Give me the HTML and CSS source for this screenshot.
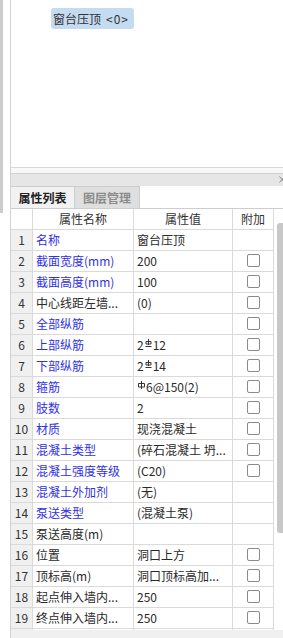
FILE: index.html
```html
<!DOCTYPE html>
<html>

<head>
  <title>属性列表</title>
  <link rel="stylesheet" href="styles.css">
</head>

<body>
  <div class="app">
    <div class="rail"><div class="rail-bar"></div></div>
    <div class="main">
      <div class="canvas"><span class="tag">窗台压顶<span class="tag-id">&lt;0&gt;</span></span></div>
      <div class="split"></div>
      <div class="dock-head">
        <svg class="dock-close" width="6" height="7" viewBox="0 0 6 7"><path d="M0.5 0.5 L5.5 6.5 M5.5 0.5 L0.5 6.5" stroke="#8a8a8a" stroke-width="1" fill="none"/></svg>
      </div>
      <div class="tabs">
        <div class="tab active">属性列表</div>
        <div class="tab">图层管理</div>
      </div>
      <div class="grid-area">
        <div class="grid">
          <div class="row head"><div class="c num"></div><div class="c name">属性名称</div><div class="c val">属性值</div><div class="c add">附加</div></div>
          <div class="row"><div class="c num">1</div><div class="c name blue">名称</div><div class="c val">窗台压顶</div><div class="c add"></div></div>
          <div class="row"><div class="c num">2</div><div class="c name blue">截面宽度(mm)</div><div class="c val">200</div><div class="c add"><span class="chk"></span></div></div>
          <div class="row"><div class="c num">3</div><div class="c name blue">截面高度(mm)</div><div class="c val">100</div><div class="c add"><span class="chk"></span></div></div>
          <div class="row"><div class="c num">4</div><div class="c name">中心线距左墙...</div><div class="c val">(0)</div><div class="c add"><span class="chk"></span></div></div>
          <div class="row"><div class="c num">5</div><div class="c name blue">全部纵筋</div><div class="c val"></div><div class="c add"><span class="chk"></span></div></div>
          <div class="row"><div class="c num">6</div><div class="c name blue">上部纵筋</div><div class="c val">2<svg class="rebar" width="7" height="10" viewBox="0 0 7 10"><path d="M3.5 0 V6 M1 2.5 H6 V5 H1 Z M0.5 7.5 H6.5" stroke="#333" stroke-width="1" fill="none"/></svg>12</div><div class="c add"><span class="chk"></span></div></div>
          <div class="row"><div class="c num">7</div><div class="c name blue">下部纵筋</div><div class="c val">2<svg class="rebar" width="7" height="10" viewBox="0 0 7 10"><path d="M3.5 0 V6 M1 2.5 H6 V5 H1 Z M0.5 7.5 H6.5" stroke="#333" stroke-width="1" fill="none"/></svg>14</div><div class="c add"><span class="chk"></span></div></div>
          <div class="row"><div class="c num">8</div><div class="c name blue">箍筋</div><div class="c val"><svg class="rebar" width="7" height="10" viewBox="0 0 7 10"><path d="M3.5 0 V8 M0.5 2.5 H6.5 V6 H0.5 Z" stroke="#333" stroke-width="1" fill="none"/></svg>6@150(2)</div><div class="c add"><span class="chk"></span></div></div>
          <div class="row"><div class="c num">9</div><div class="c name blue">肢数</div><div class="c val">2</div><div class="c add"><span class="chk"></span></div></div>
          <div class="row"><div class="c num">10</div><div class="c name blue">材质</div><div class="c val">现浇混凝土</div><div class="c add"><span class="chk"></span></div></div>
          <div class="row"><div class="c num">11</div><div class="c name blue">混凝土类型</div><div class="c val">(碎石混凝土 坍...</div><div class="c add"><span class="chk"></span></div></div>
          <div class="row"><div class="c num">12</div><div class="c name blue">混凝土强度等级</div><div class="c val">(C20)</div><div class="c add"><span class="chk"></span></div></div>
          <div class="row"><div class="c num">13</div><div class="c name blue">混凝土外加剂</div><div class="c val">(无)</div><div class="c add"></div></div>
          <div class="row"><div class="c num">14</div><div class="c name blue">泵送类型</div><div class="c val">(混凝土泵)</div><div class="c add"></div></div>
          <div class="row"><div class="c num">15</div><div class="c name">泵送高度(m)</div><div class="c val"></div><div class="c add"></div></div>
          <div class="row"><div class="c num">16</div><div class="c name">位置</div><div class="c val">洞口上方</div><div class="c add"><span class="chk"></span></div></div>
          <div class="row"><div class="c num">17</div><div class="c name">顶标高(m)</div><div class="c val">洞口顶标高加...</div><div class="c add"><span class="chk"></span></div></div>
          <div class="row"><div class="c num">18</div><div class="c name">起点伸入墙内...</div><div class="c val">250</div><div class="c add"><span class="chk"></span></div></div>
          <div class="row"><div class="c num">19</div><div class="c name">终点伸入墙内...</div><div class="c val">250</div><div class="c add"><span class="chk"></span></div></div>
          <div class="row"><div class="c num"></div><div class="c name"></div><div class="c val"></div><div class="c add"></div></div>
        </div>
        <div class="vscroll"><div class="thumb"></div></div>
      </div>
      <div class="status"></div>
    </div>
  </div>
</body>

</html>
```

FILE: styles.css
```css
body {
  margin: 0;
  font-family: "Noto Sans CJK SC", "Liberation Sans", sans-serif;
  font-size: 12px;
  color: #2a2a2a;
  background: #fff;
}

.app {
  display: flex;
  width: 283px;
  height: 638px;
  overflow: hidden;
}

.rail {
  width: 10px;
  flex: none;
}

.rail-bar {
  width: 3px;
  height: 213px;
  background: #cdcdcd;
}

.main {
  display: flex;
  flex-direction: column;
  width: 272px;
  border-left: 1px solid #d2d2d2;
}

.canvas {
  height: 168px;
  box-sizing: border-box;
  border-bottom: 1px solid #d8d8d8;
  padding: 8px 0 0 40px;
}

.tag {
  display: inline-block;
  height: 21px;
  line-height: 21px;
  padding: 0 5px 0 2px;
  background: #c4dbf2;
  border-radius: 3px;
  color: #333;
  font-size: 12px;
}

.tag-id {
  margin-left: 5px;
  letter-spacing: 1px;
}

.split {
  height: 5px;
  background: #f8f8f8;
}

.dock-head {
  display: flex;
  justify-content: flex-end;
  align-items: center;
  height: 12px;
  border-top: 1px solid #cfcfcf;
  background: #e6e6e6;
}

.dock-close {
  margin-right: -2px;
}

.tabs {
  display: flex;
  height: 23px;
  box-sizing: border-box;
  border-bottom: 1px solid #cdcdcd;
}

.tab {
  width: 64px;
  box-sizing: content-box;
  border-right: 1px solid #cdcdcd;
  border-top: 1px solid #cdcdcd;
  background: #dfdfdf;
  color: #8c8c8c;
  font-weight: bold;
  text-align: center;
  line-height: 21px;
}

.tab.active {
  width: 63px;
  background: #f2f2f2;
  color: #222;
}

.grid-area {
  display: flex;
  height: 422px;
  overflow: hidden;
}

.grid {
  width: 263px;
  flex: none;
}

.row {
  display: grid;
  grid-template-columns: 22px 101px 99px 41px;
  height: 21px;
}

.c {
  box-sizing: border-box;
  border-right: 1px solid #dadada;
  border-bottom: 1px solid #dadada;
  line-height: 20px;
  white-space: nowrap;
  overflow: hidden;
}

.num {
  background: #f0f0f0;
  text-align: center;
  color: #333;
}

.name,
.val {
  padding-left: 3px;
}

.head .c {
  text-align: center;
  padding-left: 0;
  color: #333;
}

.head .num {
  background: #fff;
}

.blue {
  color: #3131e2;
}

.rebar {
  vertical-align: top;
  margin: 4px 1px 0 1px;
}

.add {
  display: flex;
  align-items: center;
  justify-content: center;
}

.chk {
  width: 13px;
  height: 13px;
  box-sizing: border-box;
  border: 1px solid #8a8a8a;
  border-radius: 2px;
  background: #fff;
}

.vscroll {
  flex: 1;
  padding: 14px 0 0 3px;
}

.thumb {
  height: 310px;
  background: #c8c8c8;
  border-radius: 3px 0 0 3px;
}

.status {
  height: 8px;
  background: #f0f0f0;
}
```
